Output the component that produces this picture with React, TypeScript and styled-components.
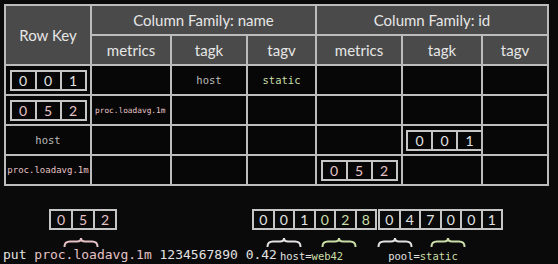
import React from 'react'
import styled, { createGlobalStyle } from 'styled-components'

type Tone = 'white' | 'pink' | 'green' | 'gray'

const tones: Record<Tone, string> = {
  white: '#e2e2e2',
  pink: '#e6c2c6',
  green: '#cadfa8',
  gray: '#bdbdbd',
}

const GlobalStyle = createGlobalStyle`
  html, body {
    margin: 0;
    padding: 0;
    background: #0a0a0a;
  }
`

const Page = styled.div`
  width: 558px;
  height: 264px;
  overflow: hidden;
  background: #0a0a0a;
  font-family: Lato, 'Liberation Sans', sans-serif;
`

const Table = styled.div`
  display: grid;
  grid-template-columns: 84px 78px 74px 67px 84px 78px 64px;
  grid-auto-rows: 28px;
  gap: 2px;
  padding: 2px;
  margin: 4px 0 0 4px;
  width: max-content;
  background: #bcbcbc;
`

const HeadCell = styled.div<{ $rows?: number; $cols?: number }>`
  grid-row: span ${p => p.$rows ?? 1};
  grid-column: span ${p => p.$cols ?? 1};
  display: flex;
  align-items: center;
  justify-content: center;
  background: #4a4a4a;
  color: #e6e6e6;
  font-size: 15px;
`

const Cell = styled.div<{ $justify?: string }>`
  display: flex;
  align-items: center;
  justify-content: ${p => p.$justify ?? 'center'};
  padding: 0 ${p => (p.$justify ? '3px' : '0')};
  background: #070707;
  overflow: hidden;
`

const Mono = styled.span<{ $size: number; $tone: Tone }>`
  font-family: 'DejaVu Sans Mono', 'Liberation Mono', monospace;
  font-size: ${p => p.$size}px;
  color: ${p => tones[p.$tone]};
  white-space: pre;
`

const Box = styled.div<{ $offset?: number }>`
  display: flex;
  margin-left: ${p => p.$offset ?? 0}px;
  border: 2px solid #c6c6c6;
`

const Digit = styled.div<{ $w: number; $tone: Tone }>`
  width: ${p => p.$w}px;
  height: 17px;
  display: flex;
  align-items: center;
  justify-content: center;
  font-size: 14px;
  color: ${p => tones[p.$tone]};

  & + & {
    border-left: 2px solid #c6c6c6;
  }
`

type Group = { digits: string; tone: Tone }

const DigitBox = ({ groups, w = 23, offset }: { groups: Group[]; w?: number; offset?: number }) => (
  <Box $offset={offset}>
    {groups.flatMap((g, gi) =>
      g.digits.split('').map((d, i) => (
        <Digit key={`${gi}-${i}`} $w={w} $tone={g.tone}>
          {d}
        </Digit>
      )),
    )}
  </Box>
)

const Bottom = styled.div`
  margin-top: 23px;
`

const DigitsRow = styled.div`
  display: flex;
  align-items: flex-start;
`

const BraceRow = styled.div`
  display: flex;
  height: 10px;
  margin-top: 7px;
`

const BraceSvg = styled.svg<{ $offset: number }>`
  display: block;
  flex: none;
  margin-left: ${p => p.$offset}px;
`

const Brace = ({ tone, offset }: { tone: Tone; offset: number }) => (
  <BraceSvg $offset={offset} width="36" height="10" viewBox="0 0 36 10">
    <path
      d="M1.5 9.5 Q1.5 4.5 7 4.5 L14 4.5 Q18 4.5 18 1 Q18 4.5 22 4.5 L29 4.5 Q34.5 4.5 34.5 9.5"
      fill="none"
      stroke={tones[tone]}
      strokeWidth="2"
      strokeLinecap="round"
    />
  </BraceSvg>
)

const TextRow = styled.div`
  display: flex;
  align-items: flex-start;
`

const Command = styled.div`
  margin-left: 3px;
  font-family: 'DejaVu Sans Mono', 'Liberation Mono', monospace;
  font-size: 13px;
  line-height: 15px;
  color: ${tones.white};
  white-space: pre;
`

const Label = styled.div<{ $offset: number }>`
  margin: 3px 0 0 ${p => p.$offset}px;
  font-family: 'DejaVu Sans Mono', 'Liberation Mono', monospace;
  font-size: 10.5px;
  line-height: 12px;
  color: ${tones.white};
  white-space: pre;
`

const Tint = styled.span<{ $tone: Tone }>`
  color: ${p => tones[p.$tone]};
`

const empty = (n: number, key: string) =>
  Array.from({ length: n }, (_, i) => <Cell key={`${key}${i}`} />)

export default function App() {
  return (
    <Page>
      <GlobalStyle />
      <Table>
        <HeadCell $rows={2}>Row Key</HeadCell>
        <HeadCell $cols={3}>Column Family: name</HeadCell>
        <HeadCell $cols={3}>Column Family: id</HeadCell>
        <HeadCell>metrics</HeadCell>
        <HeadCell>tagk</HeadCell>
        <HeadCell>tagv</HeadCell>
        <HeadCell>metrics</HeadCell>
        <HeadCell>tagk</HeadCell>
        <HeadCell>tagv</HeadCell>

        <Cell>
          <DigitBox groups={[{ digits: '001', tone: 'white' }]} />
        </Cell>
        <Cell />
        <Cell>
          <Mono $size={10.5} $tone="gray">host</Mono>
        </Cell>
        <Cell>
          <Mono $size={10.5} $tone="green">static</Mono>
        </Cell>
        {empty(3, 'a')}

        <Cell>
          <DigitBox groups={[{ digits: '052', tone: 'pink' }]} />
        </Cell>
        <Cell $justify="flex-start">
          <Mono $size={7.8} $tone="pink">proc.loadavg.1m</Mono>
        </Cell>
        {empty(5, 'b')}

        <Cell>
          <Mono $size={10.5} $tone="gray">host</Mono>
        </Cell>
        {empty(4, 'c')}
        <Cell $justify="flex-start">
          <DigitBox groups={[{ digits: '001', tone: 'white' }]} />
        </Cell>
        <Cell />

        <Cell>
          <Mono $size={9} $tone="pink">proc.loadavg.1m</Mono>
        </Cell>
        {empty(3, 'd')}
        <Cell>
          <DigitBox groups={[{ digits: '052', tone: 'pink' }]} />
        </Cell>
        {empty(2, 'e')}
      </Table>

      <Bottom>
        <DigitsRow>
          <DigitBox groups={[{ digits: '052', tone: 'pink' }]} w={20} offset={49} />
          <DigitBox
            groups={[
              { digits: '001', tone: 'white' },
              { digits: '028', tone: 'green' },
            ]}
            w={18.5}
            offset={135}
          />
          <DigitBox
            groups={[
              { digits: '047', tone: 'white' },
              { digits: '001', tone: 'white' },
            ]}
            w={18.5}
            offset={1}
          />
        </DigitsRow>
        <BraceRow>
          <Brace tone="pink" offset={63} />
          <Brace tone="white" offset={167} />
          <Brace tone="green" offset={19} />
          <Brace tone="white" offset={20} />
          <Brace tone="green" offset={17} />
        </BraceRow>
        <TextRow>
          <Command>
            put <Tint $tone="pink">proc.loadavg.1m</Tint> 1234567890 0.42
          </Command>
          <Label $offset={3}>
            host=<Tint $tone="green">web42</Tint>
          </Label>
          <Label $offset={45}>
            pool=<Tint $tone="green">static</Tint>
          </Label>
        </TextRow>
      </Bottom>
    </Page>
  )
}
